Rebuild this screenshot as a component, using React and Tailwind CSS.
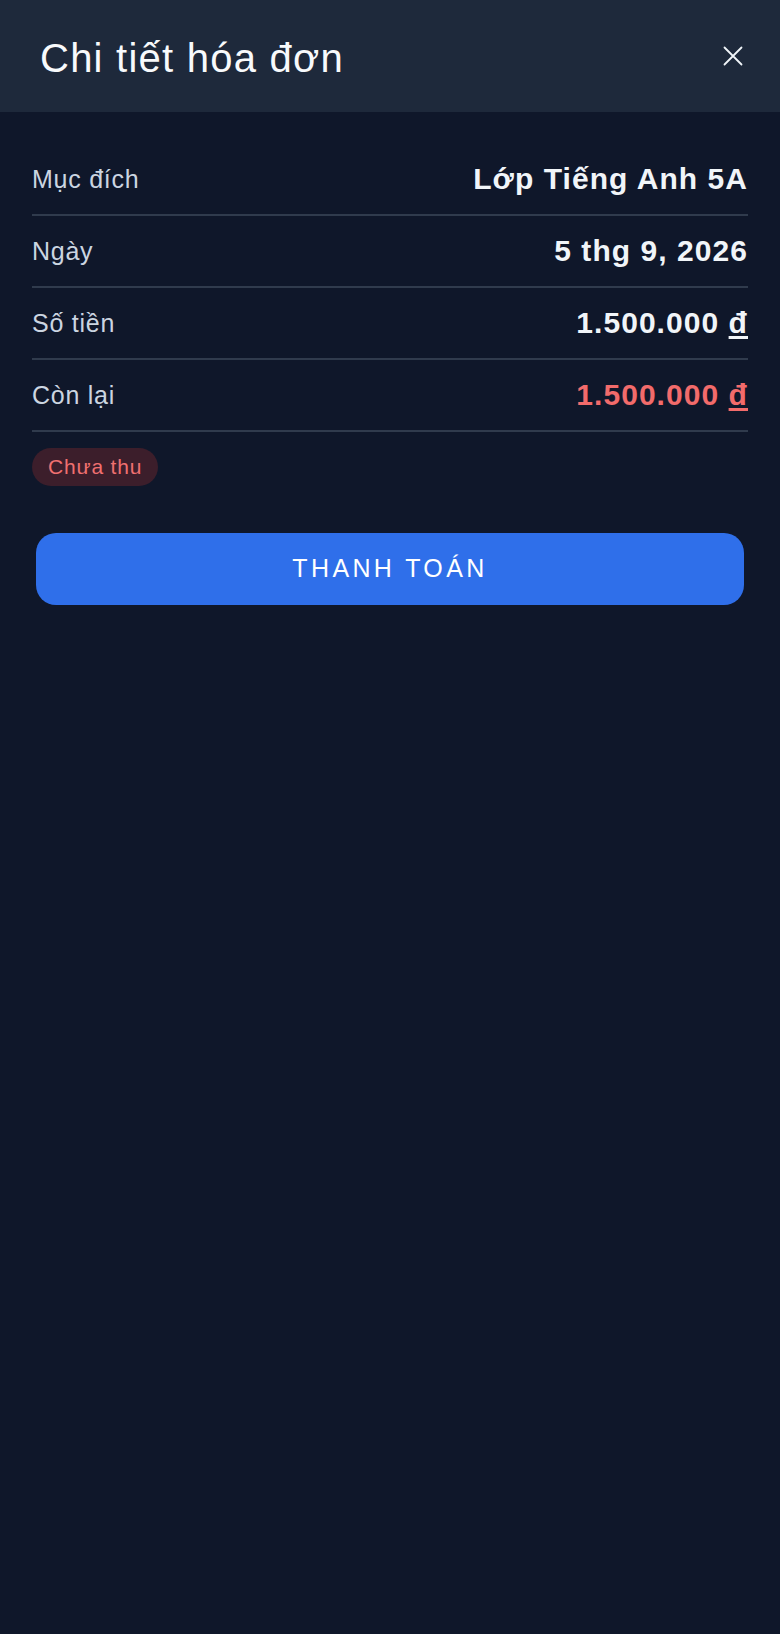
import React from 'react'

const ROWS = [
  { label: 'Mục đích', value: 'Lớp Tiếng Anh 5A' },
  { label: 'Ngày', value: '5 thg 9, 2026' },
  { label: 'Số tiền', value: '1.500.000', currency: true },
  { label: 'Còn lại', value: '1.500.000', currency: true, danger: true },
]

function CloseIcon() {
  return (
    <svg width="20" height="20" viewBox="0 0 20 20" fill="none" stroke="currentColor" strokeWidth="1.8" strokeLinecap="round">
      <path d="M1.5 1.5 L18.5 18.5 M18.5 1.5 L1.5 18.5" />
    </svg>
  )
}

export default function App() {
  return (
    <div
      className="min-h-screen bg-[#0f172a]"
      style={{ fontFamily: '"Liberation Sans", Arial, sans-serif' }}
    >
      {/* Header */}
      <div className="h-[112px] flex items-center justify-between pl-10 pr-[37px] bg-[#1e293b]">
        <h1 className="pt-1 text-[40px] leading-none tracking-[0.031em] text-[#f8fafc]">Chi tiết hóa đơn</h1>
        <button className="text-[#f1f5f9]">
          <CloseIcon />
        </button>
      </div>

      {/* Details */}
      <div className="px-8 pt-8">
        {ROWS.map(row => (
          <div
            key={row.label}
            className="h-[72px] flex items-center justify-between border-b-2 border-[#303b4d]"
          >
            <span className="text-[25px] leading-[30px] tracking-[0.03em] text-[#cbd5e1]">{row.label}</span>
            <span
              className={
                row.danger
                  ? 'text-[30px] leading-[36px] font-bold tracking-[0.035em] text-[#f26b6b]'
                  : 'text-[30px] leading-[36px] font-bold tracking-[0.035em] text-[#f1f5f9]'
              }
            >
              {row.value}
              {row.currency && (
                <>
                  {' '}
                  <span className="underline decoration-[2.5px] underline-offset-[3px]">đ</span>
                </>
              )}
            </span>
          </div>
        ))}

        <div className="mt-4">
          <span className="inline-flex items-center h-[38px] px-[16px] rounded-full bg-[#3c1e2b] text-[21px] tracking-[0.04em] text-[#f07070]">
            Chưa thu
          </span>
        </div>

        <div className="px-1 mt-[47px]">
          <button className="w-full h-[72px] rounded-[20px] bg-[#2f6fea] text-white text-[25px] tracking-[0.135em]">
            THANH TOÁN
          </button>
        </div>
      </div>
    </div>
  )
}
